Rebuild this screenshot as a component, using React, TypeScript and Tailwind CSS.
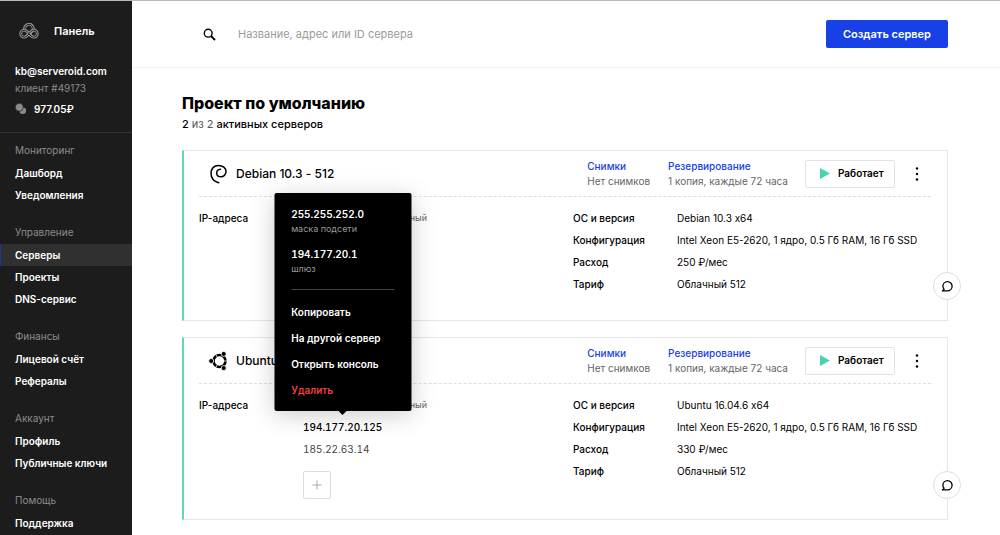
import React from "react";
import { clsx } from "clsx";

type Server = {
  name: string;
  os: "debian" | "ubuntu";
  addresses: string[];
  details: { label: string; value: string }[];
};

const App = () => {
  return (
    <div className="flex min-h-screen border-t border-[#b9b9b9] bg-white font-['Inter',sans-serif] text-[10px] text-black [font-feature-settings:'calt'_0]">
      <Sidebar />
      <div className="min-w-0 flex-1">
        <header className="flex h-[67px] items-center border-b border-[#f3f3f3] pl-[71px] pr-[52px]">
          <label htmlFor="search" aria-label="Поиск">
            <SearchIcon />
          </label>
          <input
            id="search"
            type="text"
            placeholder="Название, адрес или ID сервера"
            className="ml-[22px] min-w-0 flex-1 text-[11px] outline-none placeholder:text-[#9b9b9b]"
          />
          <button className="h-7 rounded-[2px] bg-[#1741e6] px-[17px] text-[11px] font-semibold text-white">
            Создать сервер
          </button>
        </header>
        <main className="pl-[50px] pr-[52px] pt-6">
          <h1 className="text-[16px] font-extrabold leading-[22px]">
            Проект по умолчанию
          </h1>
          <p className="mb-4 text-[11px] font-medium leading-[20px]">
            2 <span className="font-normal text-[#555]">из 2</span> активных
            серверов
          </p>
          <div className="space-y-4">
            {servers.map((server) => (
              <ServerCard key={server.name} server={server} />
            ))}
          </div>
        </main>
      </div>
    </div>
  );
};

export default App;

const Sidebar = () => (
  <aside className="w-[132px] shrink-0 overflow-hidden bg-[#1c1c1c] text-white">
    <div className="flex items-center gap-[15px] pl-[19px] pt-[22px]">
      <LogoIcon />
      <span className="text-[11px] font-semibold leading-4">Панель</span>
    </div>
    <div className="mt-6 border-b border-[#333] px-[15px] pb-[14px]">
      <p className="font-semibold leading-4">kb@serveroid.com</p>
      <p className="leading-[18px] text-[#8c8c8c]">клиент #49173</p>
      <p className="mt-[3px] flex items-center gap-[7px] font-semibold leading-[18px]">
        <CoinsIcon />
        977.05₽
      </p>
    </div>
    <nav className="space-y-[14px] pt-[5px]">
      {menu.map((section) => (
        <div key={section.title}>
          <h2 className="px-[15px] leading-6 text-[#8c8c8c]">
            {section.title}
          </h2>
          <ul>
            {section.items.map((item) => (
              <li key={item}>
                <a
                  href="#"
                  className={clsx(
                    "block border-l pl-[14px] font-semibold leading-[22px]",
                    item === "Серверы"
                      ? "border-[#1d3595] bg-[#303030]"
                      : "border-transparent"
                  )}
                >
                  {item}
                </a>
              </li>
            ))}
          </ul>
        </div>
      ))}
    </nav>
  </aside>
);

const ServerCard = ({ server }: { server: Server }) => (
  <section className="relative min-h-[171px] border border-l-2 border-[#e6e6e6] border-l-[#5ed9b4] pb-5 pl-[15px] pr-4">
    <div className="flex h-[46px] items-center border-b border-dashed border-[#dedede]">
      <div className="flex min-w-0 flex-1 items-center gap-2 pl-[9px]">
        {server.os === "debian" ? <DebianIcon /> : <UbuntuIcon />}
        <h3 className="text-[12px] font-medium">{server.name}</h3>
      </div>
      <div className="leading-[15px]">
        <a href="#" className="font-medium text-[#1741e6]">
          Снимки
        </a>
        <p className="text-[#666]">Нет снимков</p>
      </div>
      <div className="ml-[18px] leading-[15px]">
        <a href="#" className="font-medium text-[#1741e6]">
          Резервирование
        </a>
        <p className="text-[#666]">1 копия, каждые 72 часа</p>
      </div>
      <button className="ml-[17px] flex h-7 w-[90px] items-center gap-2 rounded-[2px] border border-[#e3e3e3] pl-[14px] font-semibold">
        <svg width="10" height="11" viewBox="0 0 10 11" fill="#47d3ad">
          <path d="M0 0 10 5.500 0 11z" />
        </svg>
        Работает
      </button>
      <button
        aria-label="Действия"
        className="ml-2 flex h-7 w-7 items-center justify-center"
      >
        <svg width="4" height="16" viewBox="0 0 4 16">
          <circle cx="2" cy="2.500" r="1.200" />
          <circle cx="2" cy="8" r="1.200" />
          <circle cx="2" cy="13.500" r="1.200" />
        </svg>
      </button>
    </div>

    <div className="grid grid-cols-2 gap-4 pt-[10px] leading-[22px]">
      <div className="grid grid-cols-[104px_1fr]">
        <h4 className="font-medium">IP-адреса</h4>
        <div>
          <p className="w-[124px] text-right text-[9px] leading-[22px] text-[#666]">
            приватный
          </p>
          {server.addresses.map((address, index) => (
            <div
              key={address}
              className={clsx(
                "relative w-fit tabular-nums",
                index === 0 ? "font-medium" : "text-[#444]"
              )}
            >
              {address}
              {index === 0 && <AddressMenu />}
            </div>
          ))}
          {server.addresses.length > 0 && (
            <button
              aria-label="Добавить адрес"
              className="mt-[11px] flex h-7 w-7 items-center justify-center rounded-[2px] border border-[#dedede]"
            >
              <svg width="10" height="10" viewBox="0 0 10 10" stroke="#aaa">
                <path d="M5 .5v9M.5 5h9" />
              </svg>
            </button>
          )}
        </div>
      </div>
      <dl>
        {server.details.map((item) => (
          <div key={item.label} className="grid grid-cols-[104px_1fr]">
            <dt className="font-medium">{item.label}</dt>
            <dd className="whitespace-nowrap">{item.value}</dd>
          </div>
        ))}
      </dl>
    </div>

    <button
      aria-label="Комментарий"
      className="absolute -right-[14px] bottom-5 flex h-7 w-7 items-center justify-center rounded-full border border-[#dedede] bg-white"
    >
      <svg
        width="12"
        height="12"
        viewBox="0 0 12 12"
        fill="none"
        stroke="#000"
        strokeWidth="1.300"
      >
        <path d="M1 10.800h5.500a4.600 4.600 0 1 0-4.600-4.600c0 1.300.4 2.300 1.200 3.100-.4.700-1.100 1.300-2.100 1.500z" />
      </svg>
    </button>
  </section>
);

const AddressMenu = () => (
  <div className="absolute bottom-full left-1/2 z-10 mb-[5px] w-[137px] -translate-x-1/2 rounded-[2px] bg-black px-[17px] pb-2 pt-[13px] font-semibold text-white shadow-[0_4px_24px_rgba(0,0,0,0.2)]">
    <p className="leading-4">255.255.252.0</p>
    <p className="text-[9px] font-normal leading-[14px] text-[#999]">
      маска подсети
    </p>
    <p className="mt-[10px] leading-4">194.177.20.1</p>
    <p className="text-[9px] font-normal leading-[14px] text-[#999]">шлюз</p>
    <hr className="mb-[9px] mt-[13px] border-[#444]" />
    <ul>
      {actions.map((action) => (
        <li key={action}>
          <button
            className={clsx(
              "block w-full text-left leading-[26px]",
              action === "Удалить" && "text-[#ee4037]"
            )}
          >
            {action}
          </button>
        </li>
      ))}
    </ul>
    <svg
      width="8"
      height="4"
      viewBox="0 0 8 4"
      className="absolute left-1/2 top-full -translate-x-1/2"
    >
      <path d="M0 0h8L4 4z" />
    </svg>
  </div>
);

const SearchIcon = () => (
  <svg
    width="13"
    height="13"
    viewBox="0 0 13 13"
    fill="none"
    stroke="#000"
    strokeWidth="1.400"
  >
    <circle cx="5.200" cy="5.200" r="3.900" />
    <path d="m8 8 4 4" strokeWidth="1.800" />
  </svg>
);

const loops =
  "M5.200 7.200a3.500 3.500 0 1 0 0 7c4.200 0 5.400-7 9.600-7a3.500 3.500 0 1 1 0 7c-4.200 0-5.400-7-9.600-7z";
const topLoop = "M5.900 6.600a4.200 4.200 0 1 1 7 1.800L9.800 12";

const LogoIcon = () => (
  <svg width="20" height="16" viewBox="0 0 20 16" fill="none">
    <path d={topLoop} stroke="#999" strokeWidth="2.800" />
    <path d={topLoop} stroke="#1c1c1c" strokeWidth="1" />
    <path d={loops} stroke="#999" strokeWidth="2.800" />
    <path d={loops} stroke="#1c1c1c" strokeWidth="1" />
  </svg>
);

const CoinsIcon = () => (
  <svg width="12" height="12" viewBox="0 0 12 12" fill="#8c8c8c">
    <circle cx="7.800" cy="7.800" r="3.300" />
    <circle cx="4.300" cy="4.300" r="4" stroke="#1c1c1c" strokeWidth=".7" />
  </svg>
);

const DebianIcon = () => (
  <svg
    width="20"
    height="20"
    viewBox="0 0 20 20"
    fill="none"
    stroke="#000"
    strokeLinecap="round"
    strokeWidth="1.500"
  >
    <path d="M10.800 18.700C6 17.600 3 14.300 3 9.300c0-4.600 3-7.900 7.500-7.900 4.300 0 7.500 2.600 7.500 6.200 0 3.200-2.600 5.200-5 5.200-2.500 0-4.300-1.500-4.300-3.900 0-2 1.400-3.500 3.800-3.700" />
  </svg>
);

const UbuntuIcon = () => (
  <svg width="20" height="20" viewBox="0 0 20 20">
    <circle
      cx="11.500"
      cy="10"
      r="6"
      fill="none"
      stroke="#000"
      strokeWidth="2.600"
    />
    <path
      d="M11.500 10H20M11.500 10l-4.500 7.800M11.500 10 7 2.200"
      stroke="#fff"
      strokeWidth=".8"
    />
    <g stroke="#fff" strokeWidth=".8">
      <circle cx="3.200" cy="10" r="2.500" />
      <circle cx="15.700" cy="2.900" r="2.500" />
      <circle cx="15.700" cy="17.100" r="2.500" />
    </g>
  </svg>
);

const menu = [
  { title: "Мониторинг", items: ["Дашборд", "Уведомления"] },
  { title: "Управление", items: ["Серверы", "Проекты", "DNS-сервис"] },
  { title: "Финансы", items: ["Лицевой счёт", "Рефералы"] },
  { title: "Аккаунт", items: ["Профиль", "Публичные ключи"] },
  { title: "Помощь", items: ["Поддержка"] },
];

const actions = ["Копировать", "На другой сервер", "Открыть консоль", "Удалить"];

const servers: Server[] = [
  {
    name: "Debian 10.3 - 512",
    os: "debian",
    addresses: [],
    details: [
      { label: "ОС и версия", value: "Debian 10.3 x64" },
      {
        label: "Конфигурация",
        value: "Intel Xeon E5-2620, 1 ядро, 0.5 Гб RAM, 16 Гб SSD",
      },
      { label: "Расход", value: "250 ₽/мес" },
      { label: "Тариф", value: "Облачный 512" },
    ],
  },
  {
    name: "Ubuntu",
    os: "ubuntu",
    addresses: ["194.177.20.125", "185.22.63.14"],
    details: [
      { label: "ОС и версия", value: "Ubuntu 16.04.6 x64" },
      {
        label: "Конфигурация",
        value: "Intel Xeon E5-2620, 1 ядро, 0.5 Гб RAM, 16 Гб SSD",
      },
      { label: "Расход", value: "330 ₽/мес" },
      { label: "Тариф", value: "Облачный 512" },
    ],
  },
];
